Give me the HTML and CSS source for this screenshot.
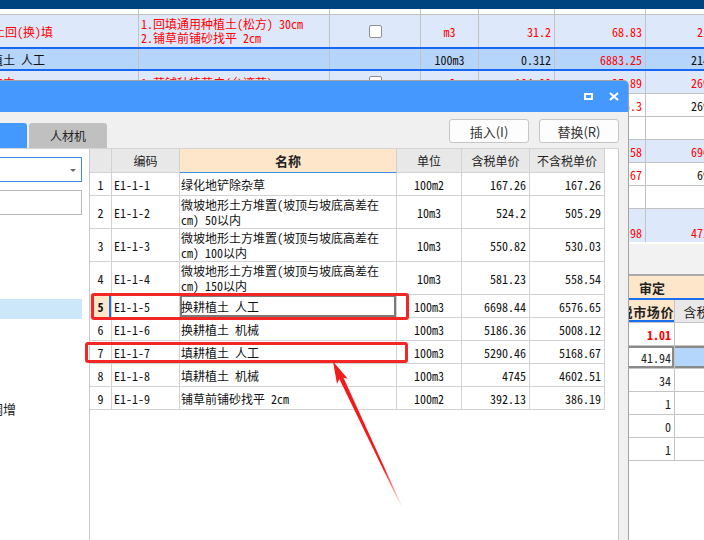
FILE: index.html
```html
<!DOCTYPE html>
<html lang="zh">
<head>
<meta charset="utf-8">
<title>定额替换</title>
<link rel="stylesheet" href="styles.css">
</head>
<body>
<div class="app">
  <div class="topbar"></div>
  <div class="bgrid">
    <div class="brow bhead"><div></div><div></div><div></div><div></div><div></div><div></div><div></div></div>
    <div class="brow r1 lb">
      <div class="red"><span class="cut c31">种植土回(换)填</span></div>
      <div class="red lines"><span>1.回填通用种植土(松方) 30cm</span><span>2.铺草前铺砂找平 2cm</span></div>
      <div class="ctr"><span class="chk"></span></div>
      <div class="ctr red">m3</div>
      <div class="num red">31.2</div>
      <div class="num red">68.83</div>
      <div class="num red">2147.5</div>
    </div>
    <div class="brow r2">
      <div><span class="cut c33">填耕植土 人工</span></div>
      <div></div>
      <div></div>
      <div class="ctr">100m3</div>
      <div class="num">0.312</div>
      <div class="num red">6883.25</div>
      <div class="num">2147.57</div>
    </div>
    <div class="brow rn lb">
      <div class="red"><span class="cut c45">种植草皮中</span></div>
      <div class="red pl">1.草铺种植草皮(台湾草)</div>
      <div class="ctr"><span class="chk"></span></div>
      <div class="ctr red">m2</div>
      <div class="num red">104.00</div>
      <div class="num red">25.89</div>
      <div class="num red">2692.56</div>
    </div>
    <div class="brow rn">
      <div></div><div></div><div></div><div></div><div></div>
      <div class="num red">26.3</div>
      <div class="num">2692.56</div>
    </div>
    <div class="brow rn">
      <div></div><div></div><div></div><div></div><div></div><div></div><div></div>
    </div>
    <div class="brow rn lb">
      <div></div><div></div><div></div><div></div><div></div>
      <div class="num red">12.58</div>
      <div class="num red">6960.58</div>
    </div>
    <div class="brow rn">
      <div></div><div></div><div></div><div></div><div></div>
      <div class="num red">34.67</div>
      <div class="num">6960.5</div>
    </div>
    <div class="brow rn">
      <div></div><div></div><div></div><div></div><div></div><div></div><div></div>
    </div>
    <div class="brow r9 lb">
      <div></div><div></div><div></div><div></div><div></div>
      <div class="num red">18.98</div>
      <div class="num red">4712.98</div>
    </div>
  </div>
  <div class="gap"></div>
  <div class="lower">
    <div class="lrow grp"><div></div><div class="grp-title">审定</div></div>
    <div class="lrow lhead"><div></div><div class="hl">除税市场价</div><div class="hg">含税市场价</div></div>
    <div class="lrow"><div></div><div class="lnum strong">1.01</div><div></div></div>
    <div class="lrow sel"><div></div><div class="lnum">41.94</div><div class="selcell"></div></div>
    <div class="lrow"><div></div><div class="lnum">34</div><div></div></div>
    <div class="lrow"><div></div><div class="lnum">1</div><div></div></div>
    <div class="lrow"><div></div><div class="lnum">0</div><div></div></div>
    <div class="lrow"><div></div><div class="lnum">1</div><div></div></div>
  </div>

  <div class="dialog">
    <div class="titlebar">
      <span class="tb-max"></span>
      <svg class="tb-close" width="10" height="9" viewBox="0 0 10 9"><path d="M1 1 L9 8 M9 1 L1 8" stroke="#fff" stroke-width="2.2" fill="none"/></svg>
    </div>
    <div class="dbody">
      <div class="toolbar">
        <div class="tabs">
          <div class="tab on">定额</div>
          <div class="tab off">人材机</div>
        </div>
        <div class="btns">
          <div class="btn">插入(I)</div>
          <div class="btn">替换(R)</div>
        </div>
      </div>
      <div class="content">
        <div class="side">
          <div class="select"><span class="caret"></span></div>
          <div class="search"></div>
          <div class="tree">
            <div class="item"></div>
            <div class="item"></div>
            <div class="item"></div>
            <div class="item"></div>
            <div class="item on"></div>
            <div class="item"></div>
            <div class="item"></div>
            <div class="item"></div>
            <div class="item"></div>
            <div class="item deep">人工费调增</div>
          </div>
        </div>
        <div class="tbox">
          <div class="trow th">
            <div></div><div>编码</div><div class="sortcol">名称</div><div>单位</div><div>含税单价</div><div>不含税单价</div>
          </div>
          <div class="trow">
            <div class="idx">1</div><div class="code">E1-1-1</div><div class="name">绿化地铲除杂草</div><div class="unit">100m2</div><div class="price">167.26</div><div class="price">167.26</div>
          </div>
          <div class="trow tall">
            <div class="idx">2</div><div class="code">E1-1-2</div><div class="name">微坡地形土方堆置(坡顶与坡底高差在<br>cm) 50以内</div><div class="unit">10m3</div><div class="price">524.2</div><div class="price">505.29</div>
          </div>
          <div class="trow tall">
            <div class="idx">3</div><div class="code">E1-1-3</div><div class="name">微坡地形土方堆置(坡顶与坡底高差在<br>cm) 100以内</div><div class="unit">10m3</div><div class="price">550.82</div><div class="price">530.03</div>
          </div>
          <div class="trow tall">
            <div class="idx">4</div><div class="code">E1-1-4</div><div class="name">微坡地形土方堆置(坡顶与坡底高差在<br>cm) 150以内</div><div class="unit">10m3</div><div class="price">581.23</div><div class="price">558.54</div>
          </div>
          <div class="trow cur">
            <div class="idx">5</div><div class="code">E1-1-5</div><div class="name edit">换耕植土 人工</div><div class="unit">100m3</div><div class="price">6698.44</div><div class="price">6576.65</div>
          </div>
          <div class="trow">
            <div class="idx">6</div><div class="code">E1-1-6</div><div class="name">换耕植土 机械</div><div class="unit">100m3</div><div class="price">5186.36</div><div class="price">5008.12</div>
          </div>
          <div class="trow">
            <div class="idx">7</div><div class="code">E1-1-7</div><div class="name">填耕植土 人工</div><div class="unit">100m3</div><div class="price">5290.46</div><div class="price">5168.67</div>
          </div>
          <div class="trow">
            <div class="idx">8</div><div class="code">E1-1-8</div><div class="name">填耕植土 机械</div><div class="unit">100m3</div><div class="price">4745</div><div class="price">4602.51</div>
          </div>
          <div class="trow">
            <div class="idx">9</div><div class="code">E1-1-9</div><div class="name">铺草前铺砂找平 2cm</div><div class="unit">100m2</div><div class="price">392.13</div><div class="price">386.19</div>
          </div>
        </div>
      </div>
    </div>
  </div>

  <div class="mark m1"></div>
  <div class="mark m2"></div>
  <svg class="arrow" width="704" height="540" viewBox="0 0 704 540">
    <defs>
      <linearGradient id="fade" gradientUnits="userSpaceOnUse" x1="340" y1="374" x2="402" y2="508">
        <stop offset="0" stop-color="#f21b1b" stop-opacity="1"/>
        <stop offset="0.7" stop-color="#f21b1b" stop-opacity="1"/>
        <stop offset="1" stop-color="#f21b1b" stop-opacity="0"/>
      </linearGradient>
    </defs>
    <polygon points="341.6,373.6 337.6,375.4 401.6,507.4 402.4,507" fill="url(#fade)"/>
    <polygon points="333,361.5 347.8,378.8 340.2,376.9 337,384" fill="#f21b1b"/>
  </svg>
</div>
</body>
</html>
```

FILE: styles.css
```css
* { box-sizing: border-box; margin: 0; padding: 0; }
html, body { width: 704px; height: 540px; overflow: hidden; background: #fff; }
body { font-family: "Noto Sans CJK SC", sans-serif; }

.app { position: relative; width: 704px; height: 540px; overflow: hidden; background: #fff; }

.topbar { height: 9px; background: #00447f; }

/* background grid */
.bgrid { font-family: "Noto Sans Mono CJK SC", "DejaVu Sans Mono", "Noto Sans CJK SC", monospace; font-size: 12px; color: #111; }
.brow { display: grid; grid-template-columns: 139px 191px 91px 58px 76px 91px 91px; width: 737px; }
.brow > div { border-right: 1px solid #c2c2c2; overflow: hidden; white-space: nowrap; display: flex; align-items: center; }
.bhead { height: 6px; border-bottom: 1px solid #c2c2c2; }
.r1 { height: 32px; }
.r2 { height: 24px; border-top: 2px solid #1668f2; border-bottom: 2px solid #1668f2; background: #b6d5fb; }
.rn { height: 23px; border-bottom: 1px solid #c2c2c2; }
.r9 { height: 33px; }
.r9 > div { align-items: flex-end; padding-bottom: 1px; }
.lb { background: #dde8fa; }
.red { color: #f00; }
.num { justify-content: flex-end; padding-right: 3px; }
.ctr { justify-content: center; }
.pl { padding-left: 2px; }
.lines { flex-direction: column; align-items: flex-start !important; justify-content: center; line-height: 14px; padding-left: 2px; }
.cut { display: block; }
.c31 { margin-left: -31px; }
.c33 { margin-left: -33px; }
.c45 { margin-left: -45px; }
.chk { width: 13px; height: 13px; border: 1px solid #8e8e8e; border-radius: 2px; background: #fff; }

.gap { height: 32px; border-top: 2px solid #fff; background: #f2f2f2; }

/* lower panel */
.lower { border-top: 2px solid #a9a9a9; background: #fff; height: 300px; width: 758px; }
.lrow { display: grid; grid-template-columns: 605px 70px 83px; height: 23px; }
.lrow > div { border-right: 1px solid #c4c4c4; border-bottom: 1px solid #c4c4c4; display: flex; align-items: center; overflow: hidden; white-space: nowrap; }
.lrow.grp { height: 24px; background: #fde6c9; border-bottom: 2px solid #1a6ef0; }
.lrow.grp > div { border: none; }
.grp-title { grid-column: 2 / 4; padding-left: 34px; font-size: 13px; font-weight: bold; color: #222; }
.lhead > div { background: #e8e8e8; font-size: 13px; color: #222; justify-content: center; }
.lhead .hl { background: #fde6c9; font-weight: bold; justify-content: flex-end; padding-right: 0; letter-spacing: 0.6px; box-shadow: inset 0 -2px 0 #1a6ef0; }
.lnum { justify-content: flex-end; padding-right: 3px; font-family: "Noto Sans Mono CJK SC", "DejaVu Sans Mono", monospace; font-size: 12px; color: #222; }
.lnum.strong { color: #f00; font-weight: bold; }
.lrow.sel > div { box-shadow: inset 0 2px 0 #8a8a8a, inset 0 -2px 0 #8a8a8a; }
.lrow.sel > .lnum { box-shadow: inset 0 2px 0 #8a8a8a, inset 0 -2px 0 #8a8a8a, inset -2px 0 0 #8a8a8a; }
.lrow.sel > .selcell { background: #b4d5fc; }

/* dialog window */
.dialog { position: absolute; left: -120px; top: 80px; width: 749px; height: 470px; border: 1px solid #a3a3a3; border-top-right-radius: 5px; background: #f0f0f0; overflow: hidden; display: flex; flex-direction: column; }
.titlebar { height: 31px; flex: none; background: #4599fe; display: flex; align-items: center; justify-content: flex-end; padding-right: 9px; gap: 16px; }
.tb-max { width: 9px; height: 7px; border: 2px solid #fff; margin-top: -1px; }
.tb-close { display: block; }
.dbody { flex: 1; display: flex; flex-direction: column; padding: 0 9px 0 8px; }
.toolbar { height: 36px; flex: none; display: flex; justify-content: space-between; }
.tabs { display: flex; align-items: flex-end; gap: 2px; }
.tab { height: 25px; border-radius: 3px 3px 0 0; display: flex; align-items: center; justify-content: center; font-size: 12px; }
.tab.on { width: 138px; background: #4499ff; color: #fff; }
.tab.off { width: 78px; background: #c0c0c0; color: #222; }
.btns { display: flex; gap: 10px; padding-top: 7px; }
.btn { width: 80px; height: 24px; border: 1px solid #c6c6c6; border-radius: 3px; background: #fdfdfd; font-size: 13px; color: #333; display: flex; align-items: center; justify-content: center; }

.content { flex: 1; display: flex; border-top: 1px solid #d4d4d4; }
.side { width: 200px; flex: none; background: #fff; padding: 8px 7px 0 0; }
.select { position: relative; height: 25px; border: 1px solid #3d8de6; background: #fff; }
.caret { position: absolute; right: 5px; top: 11px; width: 0; height: 0; border-left: 3px solid transparent; border-right: 3px solid transparent; border-top: 3px solid #6a6a6a; }
.search { height: 25px; margin-top: 8px; border: 1px solid #b8b8b8; background: #fff; }
.tree { margin-top: 4px; }
.item { height: 20px; font-size: 13px; line-height: 20px; color: #222; white-space: nowrap; }
.item.on { background: #cce6fa; }
.item.deep { padding-left: 62px; }

.tbox { flex: 1; background: #fff; border-left: 1px solid #c8c8c8; border-right: 1px solid #c8c8c8; }
.trow { display: grid; grid-template-columns: 22px 68px 217px 65px 68px 75px; width: 515px; height: 23px; font-family: "Noto Sans Mono CJK SC", "DejaVu Sans Mono", "Noto Sans CJK SC", monospace; font-size: 12px; color: #111; }
.trow.tall { height: 33px; }
.trow > div { border-right: 1px solid #d2d2d2; border-bottom: 1px solid #d2d2d2; display: flex; align-items: center; white-space: nowrap; overflow: hidden; }
.trow.th { height: 24px; font-family: "Noto Sans CJK SC", sans-serif; font-size: 12px; color: #222; }
.trow.th > div { background: #e8e8e8; justify-content: center; }
.trow.th > .sortcol { background: #fde6c9; font-weight: bold; border-bottom-color: #3d8de6; font-size: 13px; }
.idx { justify-content: center; }
.code { padding-left: 2px; }
.name { padding-left: 1px; line-height: 15px; }
.unit { justify-content: center; }
.price { justify-content: flex-end; padding-right: 3px; }
.trow.cur > .idx { background: #fde6c9; font-weight: bold; box-shadow: inset -2px 0 0 #1e6fe0; }
.trow.cur > .edit { box-shadow: inset 0 0 0 2px #7b7b7b; }

/* annotations */
.mark { position: absolute; border: 3px solid #f32525; border-radius: 3px; }
.m1 { left: 91px; top: 293px; width: 318px; height: 27px; }
.m2 { left: 85px; top: 342px; width: 323px; height: 21px; }
.arrow { position: absolute; left: 0; top: 0; pointer-events: none; }
```
